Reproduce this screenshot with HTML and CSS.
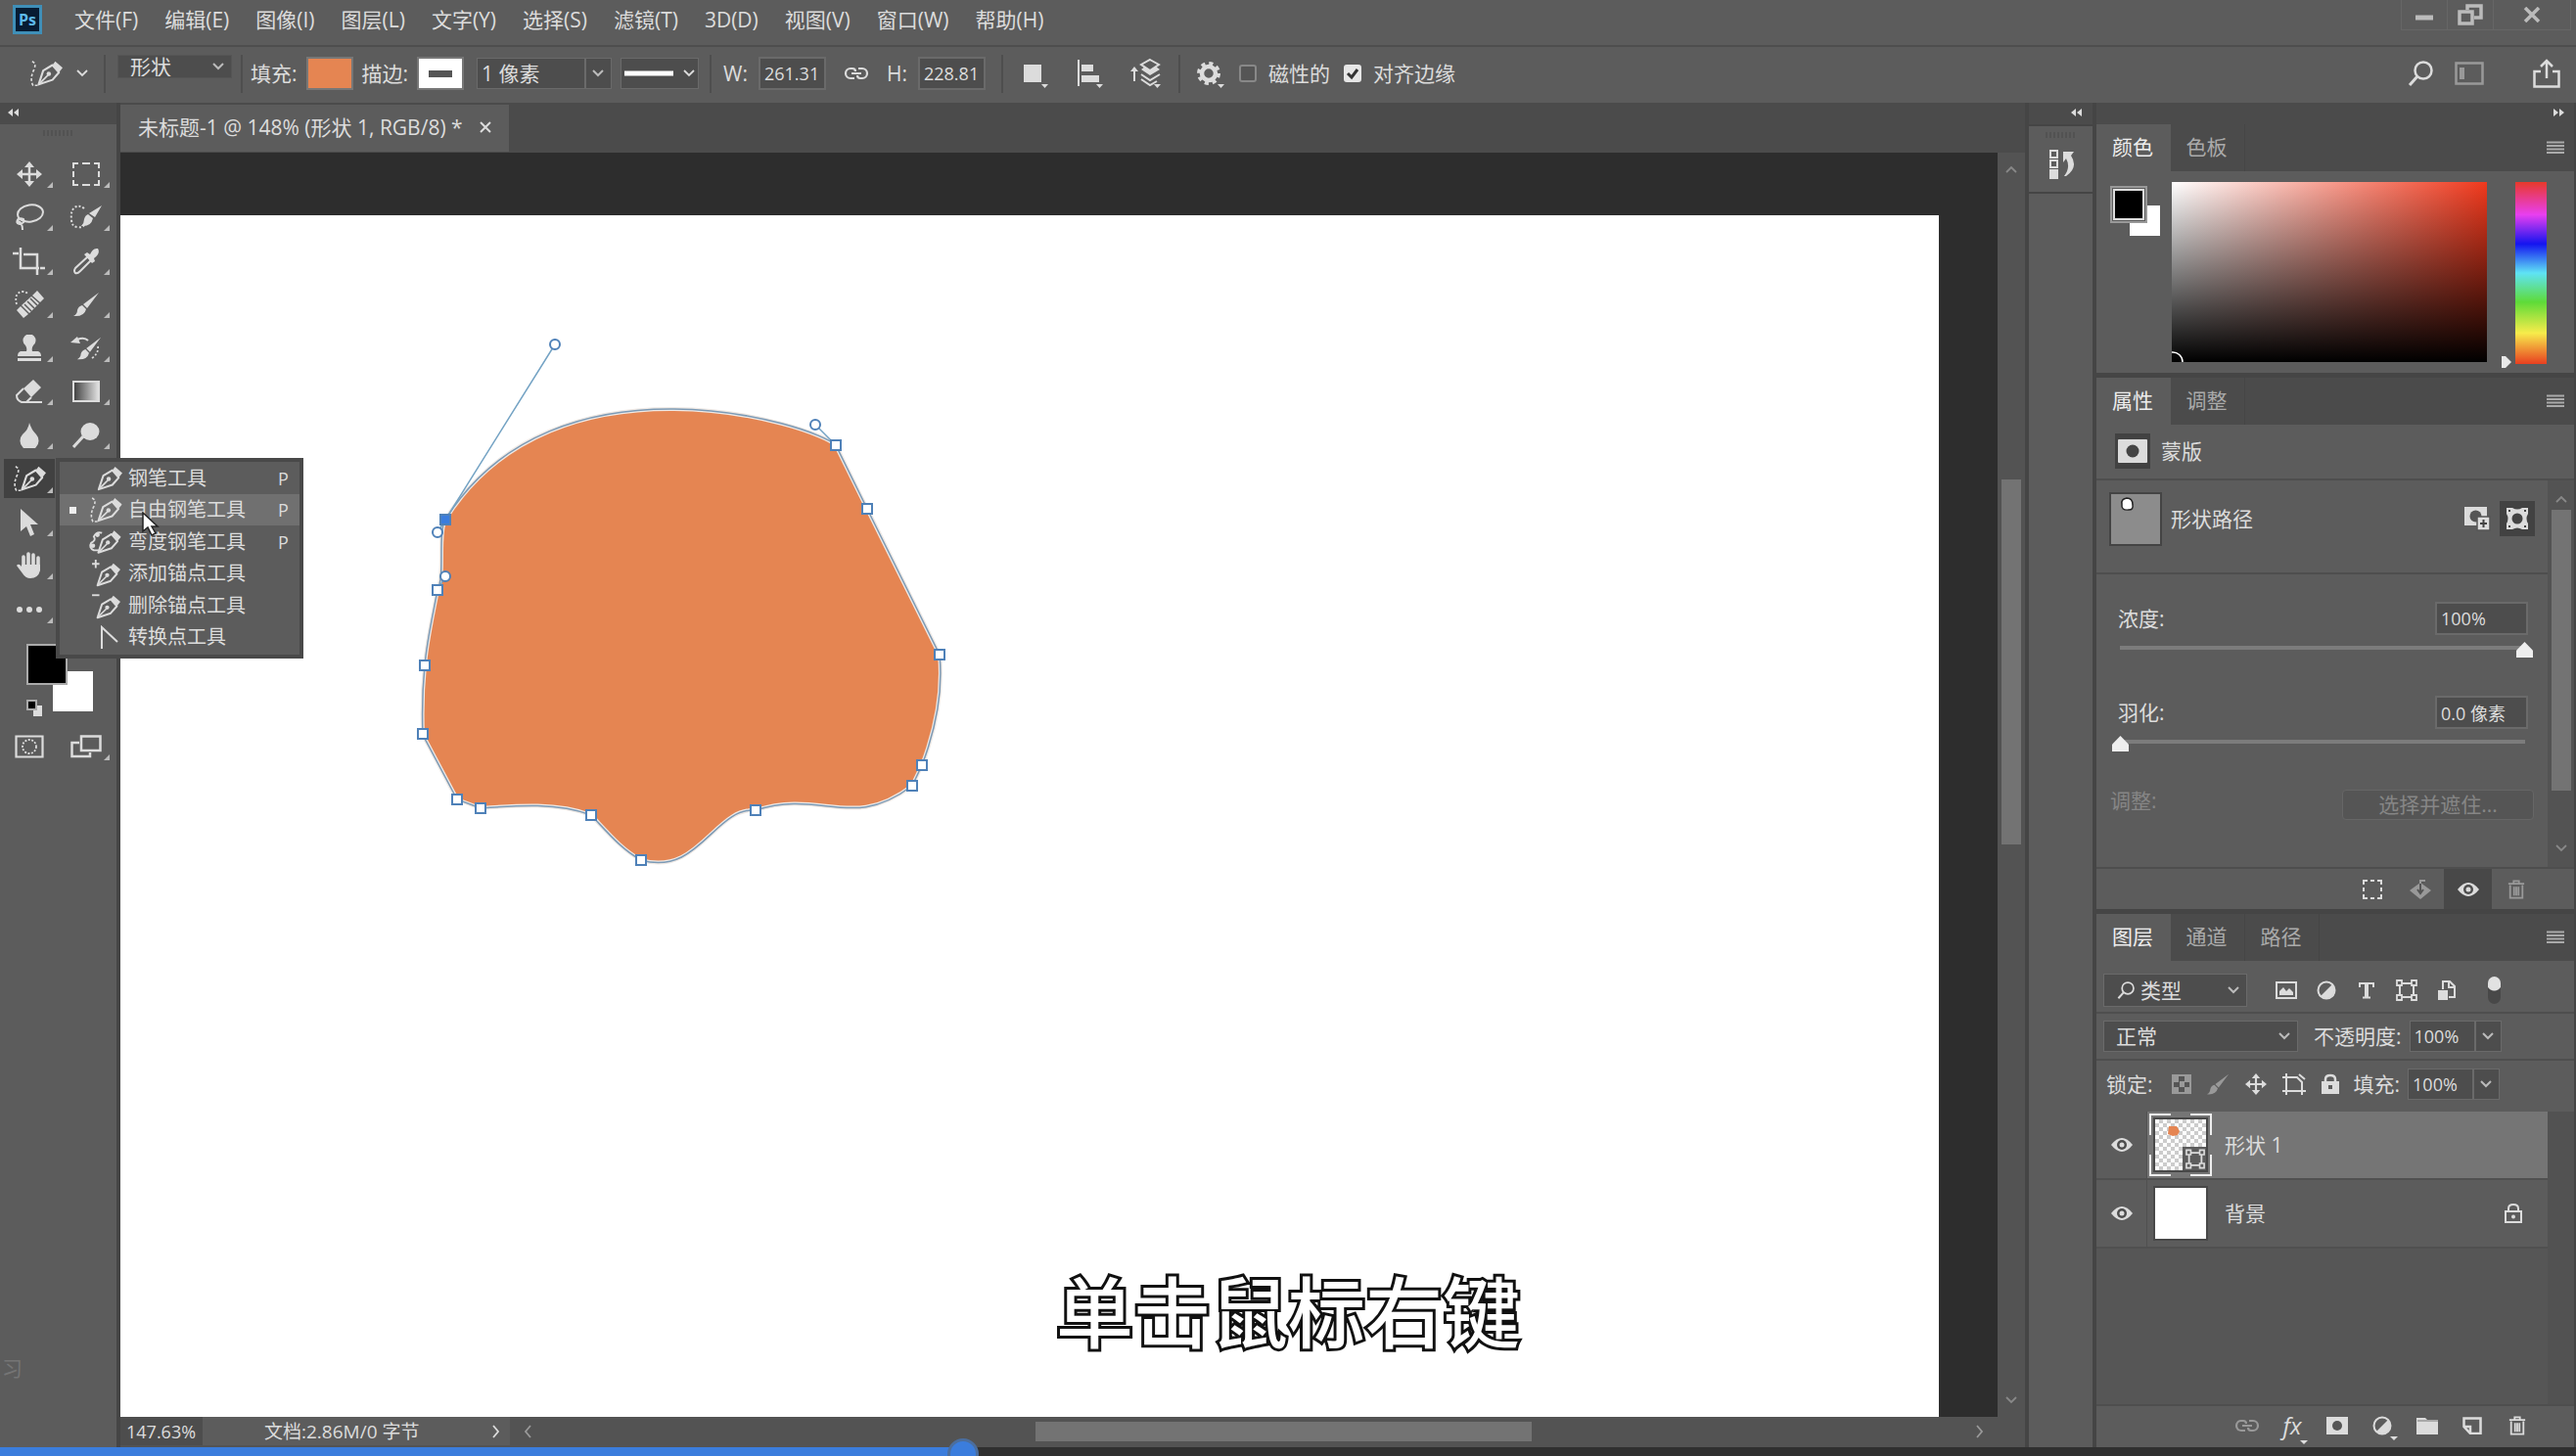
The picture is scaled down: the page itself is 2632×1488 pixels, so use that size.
FILE: index.html
```html
<!DOCTYPE html>
<html lang="zh-CN">
<head>
  <meta charset="UTF-8">
  <meta name="viewport" content="width=device-width, initial-scale=1.0">
  <title>未标题-1</title>
  <link rel="stylesheet" href="styles.css">
</head>
<body>

<svg class="symbols" aria-hidden="true">
  <symbol id="pen" viewBox="0 0 28 28">
    <path d="M2 26 L7 11 L17 5 L24 13 L17 21 Z" fill="none" stroke="currentColor" stroke-width="2.2" stroke-linejoin="round"/>
    <path d="M17 5 L20 1 L28 8 L24 13 Z" fill="currentColor"/>
    <path d="M3 25 L12 16" stroke="currentColor" stroke-width="1.8"/>
    <circle cx="13" cy="14.500" r="2.400" fill="currentColor"/>
  </symbol>
  <symbol id="freepen" viewBox="0 0 36 28">
    <path d="M3 1 Q8 3 5 10 Q0 20 4 27 L9 27" fill="none" stroke="currentColor" stroke-width="1.700" stroke-dasharray="3 2"/>
    <use href="#pen" x="8" y="0" width="28" height="28"/>
  </symbol>
  <symbol id="eye" viewBox="0 0 22 16">
    <path d="M0 8 Q11 -6 22 8 Q11 22 0 8 Z" fill="currentColor"/>
    <circle cx="11" cy="8" r="5" fill="#4d4d4d"/>
    <circle cx="11" cy="8" r="2.500" fill="currentColor"/>
  </symbol>
  <symbol id="link" viewBox="0 0 26 16">
    <path d="M11 13 H7 A5 5 0 0 1 7 3 H9 Q12 3 12 6 M15 3 H19 A5 5 0 0 1 19 13 H17 Q14 13 14 10 M8 8 H18" fill="none" stroke="currentColor" stroke-width="2.200"/>
  </symbol>
  <symbol id="brush" viewBox="0 0 28 28">
    <path d="M27 2 L15 18 L11 14 Z M10 15 L14 19 Q12 27 1 26 Q5 24 5 20 Q6 16 10 15 Z" fill="currentColor"/>
  </symbol>
  <symbol id="move" viewBox="0 0 26 26">
    <path d="M13 4 V22 M4 13 H22" stroke="currentColor" stroke-width="2.500"/>
    <path d="M13 0 L18 6 H8 Z M13 26 L18 20 H8 Z M0 13 L6 8 V18 Z M26 13 L20 8 V18 Z" fill="currentColor"/>
  </symbol>
  <symbol id="trash" viewBox="0 0 20 22">
    <path d="M1 4.500 H19 M7 4 V1.500 H13 V4 M3 6 V20.500 H17 V6 M7.500 8 V18 M10 8 V18 M12.500 8 V18" fill="none" stroke="currentColor" stroke-width="2"/>
  </symbol>
  <symbol id="halfcircle" viewBox="0 0 20 20">
    <circle cx="10" cy="10" r="8.500" fill="none" stroke="currentColor" stroke-width="2"/>
    <path d="M16 4 A8.500 8.500 0 0 1 4 16 Z" fill="currentColor"/>
  </symbol>
  <symbol id="shape" viewBox="0 0 22 22">
    <path d="M4 4 H18 V18 H4 Z" fill="none" stroke="currentColor" stroke-width="2"/>
    <path d="M1 1 H6 V6 H1 Z M16 1 H21 V6 H16 Z M1 16 H6 V21 H1 Z M16 16 H21 V21 H16 Z" fill="#5c5c5c" stroke="currentColor" stroke-width="1.800"/>
  </symbol>
  <symbol id="lens" viewBox="0 0 26 26">
    <circle cx="16" cy="10" r="8.500" fill="none" stroke="currentColor" stroke-width="2.500"/>
    <path d="M10 16 L2 25" stroke="currentColor" stroke-width="3"/>
  </symbol>
  <symbol id="up" viewBox="0 0 12 8"><path d="M1 7 L6 2 L11 7" fill="none" stroke="currentColor" stroke-width="1.800"/></symbol>
  <symbol id="down" viewBox="0 0 12 8"><path d="M1 1 L6 6 L11 1" fill="none" stroke="currentColor" stroke-width="1.800"/></symbol>
  <symbol id="left" viewBox="0 0 8 14"><path d="M7 1 L2 7 L7 13" fill="none" stroke="currentColor" stroke-width="1.800"/></symbol>
  <symbol id="right" viewBox="0 0 8 14"><path d="M1 1 L6 7 L1 13" fill="none" stroke="currentColor" stroke-width="1.800"/></symbol>
  <symbol id="collapse" viewBox="0 0 12 8"><path d="M5 0 V8 L0 4 Z M11 0 V8 L6 4 Z" fill="currentColor"/></symbol>
  <symbol id="expand" viewBox="0 0 12 8"><path d="M1 0 V8 L6 4 Z M7 0 V8 L12 4 Z" fill="currentColor"/></symbol>
  <symbol id="lines" viewBox="0 0 18 14"><path d="M0 1.500 H18 M0 5 H18 M0 8.500 H18 M0 12 H18" stroke="currentColor" stroke-width="2"/></symbol>
</svg>

<header class="menubar">
  <svg class="logo" width="30" height="30" viewBox="0 0 30 30">
    <rect x="1.500" y="1.500" width="27" height="27" fill="#071c33" stroke="#3f8fb8" stroke-width="3"/>
    <text x="15" y="21" text-anchor="middle" class="logo-text">Ps</text>
  </svg>
  <nav class="menus">
    <a href="#">文件(F)</a>
    <a href="#">编辑(E)</a>
    <a href="#">图像(I)</a>
    <a href="#">图层(L)</a>
    <a href="#">文字(Y)</a>
    <a href="#">选择(S)</a>
    <a href="#">滤镜(T)</a>
    <a href="#">3D(D)</a>
    <a href="#">视图(V)</a>
    <a href="#">窗口(W)</a>
    <a href="#">帮助(H)</a>
  </nav>
  <div class="window-buttons">
    <button aria-label="最小化"><svg width="18" height="12" viewBox="0 0 18 12"><path d="M0 9 H18" stroke="currentColor" stroke-width="5"/></svg></button>
    <button aria-label="还原"><svg width="26" height="22" viewBox="0 0 26 22"><path d="M10 6 V2 H24 V14 H17 M2 8 H15 V20 H2 Z" fill="none" stroke="currentColor" stroke-width="3.500"/></svg></button>
    <button class="close" aria-label="关闭"><svg width="18" height="16" viewBox="0 0 18 16"><path d="M2 1 L16 15 M16 1 L2 15" stroke="currentColor" stroke-width="3.500"/></svg></button>
  </div>
</header>

<div class="optionsbar">
  <div class="group tool-preset">
    <svg width="34" height="28"><use href="#freepen"/></svg>
    <svg width="12" height="8"><use href="#down"/></svg>
  </div>
  <div class="group mode">
    <select class="select mode-select" aria-label="工具模式"><option>形状</option></select>
  </div>
  <div class="group paint">
    <span>填充:</span><button class="swatch fill" aria-label="填充颜色"></button>
    <span>描边:</span><button class="swatch stroke" aria-label="描边颜色"></button>
    <select class="select split width-select" aria-label="描边宽度"><option>1 像素</option></select>
    <button class="line-select" aria-label="描边类型">
      <svg width="50" height="6"><path d="M0 3 H50" stroke="#fff" stroke-width="5"/></svg>
      <svg width="12" height="8"><use href="#down"/></svg>
    </button>
  </div>
  <div class="group size">
    <label for="w">W:</label><input class="num" id="w" value="261.31">
    <svg class="size-link" width="26" height="16"><use href="#link"/></svg>
    <label for="h">H:</label><input class="num" id="h" value="228.81">
  </div>
  <div class="group arrange">
    <button aria-label="路径操作"><svg width="28" height="30" viewBox="0 0 28 30"><path d="M1 6 H19 V24 H1 Z M19 26 H26 L22.500 30 Z" fill="currentColor"/></svg></button>
    <button aria-label="路径对齐方式"><svg width="28" height="30" viewBox="0 0 28 30"><path d="M2 1 V28" stroke="currentColor" stroke-width="2"/><path d="M5 6 H17 V13 H5 Z M5 17 H23 V24 H5 Z M20 26 H27 L23.500 30 Z" fill="currentColor"/></svg></button>
    <button aria-label="路径排列方式"><svg width="32" height="32" viewBox="0 0 32 32"><path d="M4 24 V12" stroke="currentColor" stroke-width="2"/><path d="M4 9 L8 14 H0 Z M11 12 L20 18 L30 12 L26 9 L20 13 L15 9 Z M24 27 H31 L27.500 31 Z" fill="currentColor"/><path d="M20 2 L29 7 L20 13 L11 7 Z M11 17 L20 23 L30 17 M11 22 L20 28 L27 24" fill="none" stroke="currentColor" stroke-width="2"/></svg></button>
  </div>
  <div class="group extras">
    <button aria-label="设置"><svg width="30" height="30" viewBox="0 0 30 30"><circle cx="13" cy="15" r="7" fill="none" stroke="currentColor" stroke-width="4.500"/><circle cx="13" cy="15" r="10" fill="none" stroke="currentColor" stroke-width="4" stroke-dasharray="4 3.850"/><path d="M22 26 H29 L25.500 30 Z" fill="currentColor"/></svg></button>
    <label class="check"><input type="checkbox">磁性的</label>
    <label class="check"><input type="checkbox" checked>对齐边缘</label>
  </div>
  <div class="right-tools">
    <button aria-label="搜索"><svg width="26" height="26"><use href="#lens"/></svg></button>
    <button class="dim" aria-label="工作区"><svg width="30" height="24" viewBox="0 0 30 24"><path d="M1.500 1.500 H28.500 V22.500 H1.500 Z" fill="none" stroke="currentColor" stroke-width="2.500"/><path d="M5 6 H10 V18 H5 Z" fill="currentColor"/></svg></button>
    <button aria-label="共享"><svg width="28" height="30" viewBox="0 0 28 30"><path d="M8 13 H1.500 V28.500 H26.500 V13 H20 M14 20 V3 M8 8 L14 2 L20 8" fill="none" stroke="currentColor" stroke-width="2.500"/></svg></button>
  </div>
</div>

<main class="workspace">
  <aside class="tools">
    <div class="strip"><svg width="12" height="8"><use href="#collapse"/></svg></div>
    <div class="grip"></div>
    <div class="tool-grid">
      <button class="more" aria-label="移动"><svg width="26" height="26"><use href="#move"/></svg></button>
      <button class="more" aria-label="矩形选框"><svg width="28" height="24" viewBox="0 0 28 24"><path d="M1 6 V1 H6 M10 1 H18 M22 1 H27 V6 M27 9 V15 M27 18 V23 H22 M18 23 H10 M6 23 H1 V18 M1 15 V9" fill="none" stroke="currentColor" stroke-width="2"/></svg></button>

      <button class="more" aria-label="套索"><svg width="30" height="28" viewBox="0 0 30 28"><ellipse cx="16" cy="10" rx="13" ry="8.500" transform="rotate(-8 16 10)" fill="none" stroke="currentColor" stroke-width="2"/><path d="M4 15 Q0 20 5 21 Q11 20 9 16 Q4 14 3 18 Q8 19 8 27" fill="none" stroke="currentColor" stroke-width="2"/></svg></button>
      <button class="more" aria-label="快速选择"><svg width="34" height="28" viewBox="0 0 34 28"><path d="M15 5 Q10 1 5 4 Q1 8 2 16 Q2 24 9 24 Q13 25 15 22" fill="none" stroke="currentColor" stroke-width="2" stroke-dasharray="2 2"/><path d="M33 2 L26 14 L20 10 Z M19 11 L24 15 Q22 24 12 23 Q15 20 15 16 Q16 12 19 11 Z" fill="currentColor"/></svg></button>

      <button class="more" aria-label="裁剪"><svg width="34" height="30" viewBox="0 0 34 30"><path d="M0 7 H6 M8 1 V22 H27 M11 8 H25 V29 M28 22 H33" fill="none" stroke="currentColor" stroke-width="2.500"/></svg></button>
      <button class="more" aria-label="吸管"><svg width="28" height="28" viewBox="0 0 28 28"><path d="M16 9 L3 21 Q1 24 3 26 Q5 27 8 24 L19 13" fill="none" stroke="currentColor" stroke-width="2"/><path d="M12 7 L15 5 L18 7 Q21 0 26 1 Q29 6 22 11 L23 14 L20 16 Z" fill="currentColor"/></svg></button>

      <button class="more" aria-label="修复画笔"><svg width="32" height="30" viewBox="0 0 32 30"><path d="M3 15 Q0 3 9 2 Q13 2 15 5" fill="none" stroke="currentColor" stroke-width="1.800" stroke-dasharray="2 2"/><path d="M24 1 L31 9 L27 13 L19 6 Z M7 17 L15 25 L10 29 L3 21 Z M18 7 L26 14 L16 24 L8 16 Z" fill="currentColor"/><path d="M11 15 L18 22 M14 12 L21 19 M17 9 L24 16" stroke="#5c5c5c" stroke-width="1.500"/></svg></button>
      <button class="more" aria-label="画笔"><svg width="28" height="28"><use href="#brush"/></svg></button>

      <button class="more" aria-label="仿制图章"><svg width="26" height="28" viewBox="0 0 26 28"><path d="M9 11 A6.500 6.500 0 1 1 17 11 Q15 14 16 17 H22 Q25 18 25 22 H1 Q1 18 4 17 H10 Q11 14 9 11 Z M1 24 H25 V27 H1 Z" fill="currentColor"/></svg></button>
      <button class="more" aria-label="历史记录画笔"><svg width="32" height="30" viewBox="0 0 32 30"><use href="#brush" x="6" y="1" width="26" height="28"/><path d="M0 9 L7 3 L10 10 Z" fill="currentColor"/><path d="M7 6 Q14 3 18 7" fill="none" stroke="currentColor" stroke-width="2"/><path d="M28 13 Q29 20 22 25" fill="none" stroke="currentColor" stroke-width="1.800" stroke-dasharray="2 2"/></svg></button>

      <button class="more" aria-label="橡皮擦"><svg width="28" height="26" viewBox="0 0 28 26"><path d="M18 1 L26 9 L16 19 L8 10 Z" fill="currentColor"/><path d="M8 10 L1 17 Q1 22 6 24 H11 L16 19 M8 24 H27" fill="none" stroke="currentColor" stroke-width="2"/></svg></button>
      <button class="more" aria-label="渐变"><span class="gradient-icon"></span></button>

      <button class="more" aria-label="模糊"><svg width="20" height="26" viewBox="0 0 20 26"><path d="M10 0 Q12 7 17 12 A9.500 9.500 0 1 1 3 12 Q9 7 10 0 Z" fill="currentColor"/></svg></button>
      <button class="more" aria-label="减淡"><svg width="28" height="28" viewBox="0 0 28 28"><ellipse cx="18" cy="10" rx="9.500" ry="9" fill="currentColor"/><path d="M11 15 L1 26" stroke="currentColor" stroke-width="3"/></svg></button>

      <button class="more active" aria-label="自由钢笔"><svg width="34" height="28"><use href="#freepen"/></svg></button>
      <button aria-label="横排文字"></button>

      <button class="more" aria-label="路径选择"><svg width="20" height="28" viewBox="0 0 20 28"><path d="M1 0 L19 16 H11 L15 26 L11 28 L7 18 L1 23 Z" fill="currentColor"/></svg></button>
      <button aria-label="矩形"></button>

      <button class="more" aria-label="抓手"><svg width="26" height="28" viewBox="0 0 26 28"><path d="M7 15 V5 M12 14 V2 M17 14 V3 M22 16 V6" stroke="currentColor" stroke-width="3.600" stroke-linecap="round"/><path d="M5 13 H24 V19 Q22 27 14 27 Q9 27 6 22 L0 14 Q2 11 5 15 Z" fill="currentColor"/></svg></button>
      <button aria-label="缩放"></button>

      <button class="more" aria-label="编辑工具栏"><svg width="28" height="8" viewBox="0 0 28 8"><circle cx="4" cy="4" r="3" fill="currentColor"/><circle cx="14" cy="4" r="3" fill="currentColor"/><circle cx="24" cy="4" r="3" fill="currentColor"/></svg></button>
    </div>
    <svg class="color-wells" width="72" height="78" viewBox="0 0 72 78">
      <rect x="27" y="28" width="41" height="41" fill="#fff"/>
      <rect x="1" y="1" width="40" height="40" fill="#000" stroke="#aaa" stroke-width="2"/>
      <path d="M7 63 H16 V74 H7 Z" fill="#ddd"/>
      <rect x="1" y="58" width="9" height="9" fill="#000" stroke="#aaa" stroke-width="2"/>
    </svg>
    <div class="screen-modes">
      <button aria-label="快速蒙版"><svg width="30" height="24" viewBox="0 0 30 24"><path d="M1.500 1.500 H28.500 V22.500 H1.500 Z" fill="none" stroke="currentColor" stroke-width="2.200"/><circle cx="15" cy="12" r="7" fill="none" stroke="currentColor" stroke-width="1.800" stroke-dasharray="2 1.500"/></svg></button>
      <button class="more" aria-label="屏幕模式"><svg width="32" height="24" viewBox="0 0 32 24"><path d="M11 1.500 H30.500 V16 H11 Z M9 8 H1.500 V22 H20 V18" fill="none" stroke="currentColor" stroke-width="2.500"/></svg></button>
    </div>
    <div class="watermark">习</div>

    <ul class="flyout">
      <li><svg width="26" height="26"><use href="#pen"/></svg>钢笔工具<kbd>P</kbd></li>
      <li class="current"><svg width="34" height="26"><use href="#freepen"/></svg>自由钢笔工具<kbd>P</kbd></li>
      <li><svg width="36" height="26" viewBox="0 0 36 28"><path d="M13 23 H6 Q0 20 3 15 Q9 12 6 8 Q9 2 15 4" fill="none" stroke="currentColor" stroke-width="2"/><circle cx="5" cy="18" r="2.500" fill="currentColor"/><circle cx="10" cy="6" r="2.500" fill="currentColor"/><use href="#pen" x="9" y="0" width="27" height="28"/></svg>弯度钢笔工具<kbd>P</kbd></li>
      <li><svg width="32" height="28" viewBox="0 0 32 30"><path d="M4 0 V9 M0 4.500 H8" stroke="currentColor" stroke-width="2"/><use href="#pen" x="4" y="3" width="27" height="27"/></svg>添加锚点工具</li>
      <li><svg width="32" height="28" viewBox="0 0 32 30"><path d="M0 3.500 H8" stroke="currentColor" stroke-width="2"/><use href="#pen" x="4" y="3" width="27" height="27"/></svg>删除锚点工具</li>
      <li><svg width="26" height="24" viewBox="0 0 26 24"><path d="M5 24 V2 L21 17" fill="none" stroke="currentColor" stroke-width="2"/></svg>转换点工具</li>
    </ul>
    <svg class="cursor" width="18" height="26" viewBox="0 0 18 26"><path d="M1 1 V20 L6 16 L10 24 L14 22 L10 15 H16 Z" fill="#fff" stroke="#222" stroke-width="1.500"/></svg>
  </aside>

  <section class="document">
    <div class="tabs">
      <div class="doc-tab">未标题-1 @ 148% (形状 1, RGB/8) *
        <button aria-label="关闭文档"><svg width="12" height="12" viewBox="0 0 12 12"><path d="M1 1 L11 11 M11 1 L1 11" stroke="currentColor" stroke-width="2"/></svg></button>
      </div>
    </div>
    <div class="stage">
      <div class="viewport">
        <svg class="artboard">
          <g transform="translate(-123 -220)">
            <path d="M455 531 C567 352 833 434 854 455 L886 520 L960 669 C963 700 960 735 942 782 L932 803 C870 850 840 806 772 828 C730 825 714 896 655 879 C635 868 622 852 604 833 C570 820 530 823 491 826 L467 817 L432 751 C431 725 432 700 434 680 C436 655 443 625 447 603 C455 589 447 544 455 531 Z" class="shape-fill"/>
            <path d="M455 531 C567 352 833 434 854 455 L886 520 L960 669 C963 700 960 735 942 782 L932 803 C870 850 840 806 772 828 C730 825 714 896 655 879 C635 868 622 852 604 833 C570 820 530 823 491 826 L467 817 L432 751 C431 725 432 700 434 680 C436 655 443 625 447 603 C455 589 447 544 455 531 Z" class="shape-path"/>
            <path d="M447 544 L567 352 M833 434 L854 455 M447 603 L455 589" class="handle-line"/>
            <g class="handles">
              <circle cx="567" cy="352" r="5"/>
              <circle cx="833" cy="434" r="5"/>
              <circle cx="447" cy="544" r="5"/>
              <circle cx="455" cy="589" r="5"/>
              <rect x="849" y="450" width="10" height="10"/>
              <rect x="881" y="515" width="10" height="10"/>
              <rect x="955" y="664" width="10" height="10"/>
              <rect x="937" y="777" width="10" height="10"/>
              <rect x="927" y="798" width="10" height="10"/>
              <rect x="767" y="823" width="10" height="10"/>
              <rect x="650" y="874" width="10" height="10"/>
              <rect x="599" y="828" width="10" height="10"/>
              <rect x="486" y="821" width="10" height="10"/>
              <rect x="462" y="812" width="10" height="10"/>
              <rect x="427" y="745" width="10" height="10"/>
              <rect x="429" y="675" width="10" height="10"/>
              <rect x="442" y="598" width="10" height="10"/>
              <rect class="selected" x="450" y="526" width="10" height="10"/>
            </g>
          </g>
        </svg>
      </div>
      <div class="vscroll">
        <svg width="12" height="8"><use href="#up"/></svg>
        <div class="track"><div class="thumb"></div></div>
        <svg width="12" height="8"><use href="#down"/></svg>
      </div>
    </div>
    <div class="statusbar">
      <input class="zoom" value="147.63%" aria-label="缩放">
      <div class="docsize">文档:2.86M/0 字节<svg width="8" height="14"><use href="#right"/></svg></div>
      <div class="hscroll">
        <svg width="8" height="14"><use href="#left"/></svg>
        <div class="track"><div class="thumb"></div></div>
        <svg width="8" height="14"><use href="#right"/></svg>
      </div>
    </div>
  </section>

  <aside class="dock">
    <div class="strip end"><svg width="12" height="8"><use href="#collapse"/></svg></div>
    <div class="dock-group">
      <div class="grip"></div>
      <button aria-label="历史记录"><svg width="28" height="32" viewBox="0 0 28 32"><path d="M2 2 H9 V9 H2 Z M2 12 H9 V19 H2 Z" fill="none" stroke="currentColor" stroke-width="2"/><path d="M1 21 H10 V31 H1 Z" fill="currentColor"/><path d="M15 3 H26 L23 7 Q31 19 18 28 H16 Q23 19 18 10 L15 14 Z" fill="currentColor"/></svg></button>
    </div>
    <div class="dock-rest"></div>
  </aside>

  <aside class="panels">
    <div class="strip end"><svg width="12" height="8"><use href="#expand"/></svg></div>

    <section class="panel color-panel">
      <div class="panel-tabs">
        <button class="on">颜色</button><button>色板</button>
        <svg width="18" height="14"><use href="#lines"/></svg>
      </div>
      <div class="color-body">
        <svg width="52" height="52" viewBox="0 0 52 52">
          <rect x="20" y="20" width="31" height="31" fill="#fff"/>
          <rect x="1" y="1" width="36" height="36" fill="#5c5c5c" stroke="#999" stroke-width="2"/>
          <rect x="4" y="4" width="30" height="30" fill="#000" stroke="#ddd" stroke-width="2"/>
        </svg>
        <div class="picker"><svg width="12" height="12" viewBox="0 0 12 12"><path d="M0 2 A10 10 0 0 1 11 12" fill="none" stroke="#fff" stroke-width="1.500"/></svg></div>
        <svg class="hue-mark" width="11" height="14" viewBox="0 0 11 14"><path d="M1 1 H5 L11 7 L5 13 H1 Z" fill="#e8e8e8"/></svg>
        <div class="hue"></div>
      </div>
    </section>

    <section class="panel props-panel">
      <div class="panel-tabs">
        <button class="on">属性</button><button>调整</button>
        <svg width="18" height="14"><use href="#lines"/></svg>
      </div>
      <div class="mask-head">
        <span class="dark-box"><svg width="30" height="24" viewBox="0 0 30 24"><rect width="30" height="24" rx="1" fill="currentColor"/><circle cx="15" cy="12" r="6.500" fill="#444"/></svg></span>蒙版
      </div>
      <div class="props-scroll">
        <div class="props-main">
          <div class="shape-row">
            <svg width="54" height="55" viewBox="0 0 54 55"><rect x="1" y="1" width="52" height="53" fill="#8c8c8c" stroke="#444" stroke-width="2"/><path d="M13 12 Q12 7 18 6 Q24 6 24 13 Q25 18 20 18 Q12 19 13 12 Z" fill="#fff" stroke="#222" stroke-width="1.500"/></svg>
            <span>形状路径</span>
            <svg class="add-mask" width="28" height="26" viewBox="0 0 28 26"><path d="M1 1 H24 V20 H1 Z" fill="currentColor"/><circle cx="12.500" cy="10.500" r="6" fill="#555"/><rect x="14" y="11" width="13" height="14" fill="#ddd" stroke="#555" stroke-width="1.500"/><path d="M17 18 H24 M20.500 14 V22" stroke="#444" stroke-width="2"/></svg>
            <span class="dark-box"><svg width="24" height="24" viewBox="0 0 24 24"><path d="M1 1 H7 Q12 4 17 1 H23 V7 Q20 12 23 17 V23 H17 Q12 20 7 23 H1 V17 Q4 12 1 7 Z" fill="currentColor"/><circle cx="12" cy="12" r="5.500" fill="#444"/><path d="M3 3 H5 V5 H3 Z M19 3 H21 V5 H19 Z M3 19 H5 V21 H3 Z M19 19 H21 V21 H19 Z" fill="#444"/></svg></span>
          </div>
          <div class="slider-block">
            <div class="slider-head"><label for="density">浓度:</label><input class="num" value="100%" aria-label="浓度值"></div>
            <input type="range" id="density" value="100">
          </div>
          <div class="slider-block">
            <div class="slider-head"><label for="feather">羽化:</label><input class="num" value="0.0 像素" aria-label="羽化值"></div>
            <input type="range" id="feather" value="0">
          </div>
          <div class="refine">调整:<button disabled>选择并遮住...</button></div>
        </div>
        <div class="vscroll">
          <svg width="12" height="8"><use href="#up"/></svg>
          <div class="track"><div class="thumb"></div></div>
          <svg width="12" height="8"><use href="#down"/></svg>
        </div>
      </div>
      <div class="props-foot">
        <button aria-label="载入选区"><svg width="20" height="20" viewBox="0 0 20 20"><path d="M1 5 V1 H5 M8 1 H12 M15 1 H19 V5 M19 8 V12 M19 15 V19 H15 M12 19 H8 M5 19 H1 V15 M1 12 V8" fill="none" stroke="currentColor" stroke-width="2"/></svg></button>
        <button class="dim" aria-label="应用蒙版"><svg width="24" height="22" viewBox="0 0 24 22"><path d="M12 4 L23 12 L12 21 L1 12 Z" fill="currentColor"/><path d="M9 11 L12 15 L15 11 M12 14 V3 H16" fill="none" stroke="#555" stroke-width="2"/><path d="M12 5 V2 H17" fill="none" stroke="currentColor" stroke-width="2"/></svg></button>
        <button class="pressed" aria-label="停用蒙版"><svg width="22" height="16"><use href="#eye"/></svg></button>
        <button class="dim" aria-label="删除蒙版"><svg width="18" height="22"><use href="#trash"/></svg></button>
      </div>
    </section>

    <section class="panel layers-panel">
      <div class="panel-tabs">
        <button class="on">图层</button><button>通道</button><button>路径</button>
        <svg width="18" height="14"><use href="#lines"/></svg>
      </div>
      <div class="filter-row">
        <div class="kind"><svg width="18" height="20"><use href="#lens"/></svg><select class="select" aria-label="图层过滤"><option>类型</option></select></div>
        <div class="filter-icons">
          <button aria-label="像素图层"><svg width="22" height="18" viewBox="0 0 22 18"><path d="M1 1 H21 V17 H1 Z" fill="none" stroke="currentColor" stroke-width="2"/><path d="M4 14 V10 L8 6 L11 10 L14 7 L18 11 V14 Z" fill="currentColor"/></svg></button>
          <button aria-label="调整图层"><svg width="20" height="20"><use href="#halfcircle"/></svg></button>
          <button aria-label="文字图层"><svg width="18" height="18" viewBox="0 0 18 18"><path d="M1 2 H17 M2 1 V6 M16 1 V6 M5 16.500 H13" fill="none" stroke="currentColor" stroke-width="2"/><path d="M9 1 V17" stroke="currentColor" stroke-width="4"/></svg></button>
          <button aria-label="形状图层"><svg width="22" height="22"><use href="#shape"/></svg></button>
          <button aria-label="智能对象"><svg width="20" height="22" viewBox="0 0 20 22"><path d="M6 10 V2 H13 L18 7 V18 H12 M12 2 V8 H18" fill="none" stroke="currentColor" stroke-width="2"/><path d="M1 11 H11 V21 H1 Z" fill="currentColor"/></svg></button>
        </div>
        <span class="toggle"></span>
      </div>
      <div class="blend-row">
        <select class="select blend" aria-label="混合模式"><option>正常</option></select>
        <label for="opacity">不透明度:</label>
        <select class="select split percent" id="opacity"><option>100%</option></select>
      </div>
      <div class="lock-row">
        <span>锁定:</span>
        <div class="lock-icons">
          <span class="checker"></span>
          <svg class="dim" width="24" height="24"><use href="#brush"/></svg>
          <svg width="22" height="22"><use href="#move"/></svg>
          <svg width="24" height="22" viewBox="0 0 24 22"><path d="M0 4 H15 L20 9 V18 M4 0 V18 H24 M4 18 V22 M20 18 V22 M17 1 L23 6 M0 18 H4" fill="none" stroke="currentColor" stroke-width="2"/></svg>
          <svg width="18" height="22" viewBox="0 0 18 22"><path d="M4 9 V6 Q4 2 9 2 Q14 2 14 6 V9" fill="none" stroke="currentColor" stroke-width="2.500"/><path d="M0 8 H18 V21 H0 Z M7 12 V16 H11 V12 Z" fill="currentColor" fill-rule="evenodd"/></svg>
        </div>
        <label for="fill">填充:</label>
        <select class="select split percent" id="fill"><option>100%</option></select>
      </div>
      <div class="layer-list">
        <div class="layers">
          <div class="layer selected">
            <button class="eye" aria-label="可见性"><svg width="22" height="16"><use href="#eye"/></svg></button>
            <div class="layer-body">
              <div class="frame"><div class="thumbnail transparent">
                <svg width="52" height="52" viewBox="0 0 52 52"><path d="M14 7 H22 L25 12 L23 16 L18 17 L13 15 Z" fill="#e58552"/><rect x="28" y="28" width="24" height="24" fill="#5c5c5c"/><use href="#shape" x="31" y="30" width="20" height="21"/></svg>
              </div></div>
              <span>形状 1</span>
            </div>
          </div>
          <div class="layer">
            <button class="eye" aria-label="可见性"><svg width="22" height="16"><use href="#eye"/></svg></button>
            <div class="layer-body">
              <div class="frame plain"><div class="thumbnail"></div></div>
              <span>背景</span>
              <svg class="locked" width="18" height="22" viewBox="0 0 18 22"><path d="M4 9 V6 Q4 2 9 2 Q14 2 14 6 V9 M1 9 H17 V20 H1 Z" fill="none" stroke="currentColor" stroke-width="2"/><circle cx="9" cy="14.500" r="2" fill="currentColor"/></svg>
            </div>
          </div>
        </div>
        <div class="list-scroll"></div>
      </div>
      <div class="layers-foot">
        <button class="dim" aria-label="链接图层"><svg width="26" height="16"><use href="#link"/></svg></button>
        <button class="fx more-dot" aria-label="图层样式">fx</button>
        <button aria-label="添加蒙版"><svg width="22" height="18" viewBox="0 0 22 18"><rect width="22" height="18" fill="currentColor"/><circle cx="11" cy="9" r="5" fill="#555"/></svg></button>
        <button class="more-dot" aria-label="新建调整图层"><svg width="20" height="20"><use href="#halfcircle"/></svg></button>
        <button aria-label="新建组"><svg width="22" height="18" viewBox="0 0 22 18"><path d="M0 1 H9 L11 3 H22 V18 H0 Z" fill="currentColor"/><path d="M1 4 H22" stroke="#777" stroke-width="1"/></svg></button>
        <button aria-label="新建图层"><svg width="20" height="18" viewBox="0 0 20 18"><path d="M8 17 H18.500 V1.500 H1.500 V10 L8 17 V10 H2" fill="none" stroke="currentColor" stroke-width="2.500"/></svg></button>
        <button aria-label="删除图层"><svg width="18" height="22"><use href="#trash"/></svg></button>
      </div>
    </section>
  </aside>
</main>

<div class="progress"><div class="played"></div></div>
<p class="subtitle">单击鼠标右键</p>

</body>
</html>
```
FILE: styles.css
```css
:root {
  --panel: #5c5c5c;
  --strip: #4b4b4b;
  --field: #4d4d4d;
  --line: #454545;
  --edge: #6a6a6a;
  --text: #dcdcdc;
  --dim: #999;
  --chevron: url("data:image/svg+xml,%3Csvg xmlns='http://www.w3.org/2000/svg' width='12' height='8'%3E%3Cpath d='M1 1L6 6L11 1' fill='none' stroke='%23bbb' stroke-width='2'/%3E%3C/svg%3E");
}

* { box-sizing: border-box; }
html, body { height: 100%; }
body {
  margin: 0;
  display: flex;
  flex-direction: column;
  position: relative;
  overflow: hidden;
  background: #444;
  color: var(--text);
  font-family: "Open Sans", "Noto Sans CJK SC", sans-serif;
  font-size: 21px;
  line-height: 28px;
}
button, input, select { font: inherit; color: inherit; }
button {
  display: flex;
  align-items: center;
  justify-content: center;
  margin: 0;
  padding: 0;
  border: 0;
  background: none;
}
svg { display: block; flex: none; }
.symbols { position: absolute; width: 0; height: 0; }
.dim { color: var(--dim); }

/* menu bar */
.menubar {
  flex: none;
  display: flex;
  align-items: flex-start;
  height: 46px;
  padding-left: 13px;
  background: var(--panel);
}
.logo { margin-top: 5px; }
.logo-text { fill: #5db9ec; font-size: 16px; font-weight: bold; }
.menus {
  display: flex;
  gap: 27px;
  margin: 6px 0 0 33px;
}
.menus a { color: inherit; text-decoration: none; white-space: nowrap; }
.window-buttons {
  display: flex;
  height: 31px;
  margin: 0 5px 0 auto;
  border: 1px solid #666;
  border-top: 0;
  color: #bbb;
}
.window-buttons button { width: 47px; border-right: 1px solid #666; }
.window-buttons .close { width: 78px; border: 0; }

/* options bar */
.optionsbar {
  flex: none;
  display: flex;
  align-items: center;
  height: 59px;
  padding-bottom: 3px;
  background: var(--panel);
  border-top: 2px solid #4e4e4e;
}
.group {
  display: flex;
  align-items: center;
  height: 39px;
  border-right: 2px solid #4e4e4e;
  white-space: nowrap;
}
.tool-preset { gap: 14px; padding: 0 16px 0 30px; }
.mode { align-items: flex-start; padding: 0 9px 0 12px; }
.paint { gap: 9px; padding: 0 11px 0 8px; }
.size { padding: 0 16px 0 12px; gap: 11px; }
.size-link { margin: 0 7px; }
.arrange { gap: 27px; padding: 0 17px 0 20px; }
.extras { gap: 14px; padding: 0 0 0 16px; border: 0; }
.select {
  height: 32px;
  padding: 0 30px 0 12px;
  border: 1px solid var(--edge);
  background: var(--chevron) no-repeat right 7px center var(--field);
  appearance: none;
  line-height: 26px;
}
.split {
  background:
    linear-gradient(var(--edge), var(--edge)) no-repeat right 25px center / 2px 100%,
    var(--chevron) no-repeat right 7px center,
    var(--field);
}
.mode-select { width: 117px; height: 24px; line-height: 20px; border-color: #555; }
.width-select { width: 138px; margin-left: 4px; padding-left: 4px; }
.swatch { width: 48px; height: 34px; border: 2px solid #777; }
.fill { background: #e58552; }
.stroke { background: linear-gradient(#555, #555) center / 24px 7px no-repeat #fff; }
.line-select {
  width: 80px;
  height: 32px;
  gap: 10px;
  background: var(--field);
  border: 1px solid var(--edge);
}
.num {
  width: 69px;
  height: 34px;
  padding: 0 4px;
  background: var(--field);
  border: 2px solid var(--edge);
  font-size: 18px;
}
.check { display: flex; align-items: center; gap: 12px; }
.check input {
  appearance: none;
  width: 18px;
  height: 18px;
  margin: 0;
  border: 2px solid #888;
  border-radius: 3px;
  background: #555;
}
.check input:checked {
  border-color: #e6e6e6;
  background: #e6e6e6 url("data:image/svg+xml,%3Csvg xmlns='http://www.w3.org/2000/svg' width='14' height='14'%3E%3Cpath d='M2 7L6 11L12 3' fill='none' stroke='%23333' stroke-width='3'/%3E%3C/svg%3E") center no-repeat;
}
.right-tools {
  display: flex;
  align-items: center;
  gap: 22px;
  margin: 0 16px 0 auto;
}
.right-tools button:last-child { margin-left: 28px; }

/* workspace */
.workspace {
  flex: 1;
  min-height: 0;
  display: flex;
  gap: 4px;
  background: var(--line);
}
.strip {
  flex: none;
  display: flex;
  align-items: center;
  height: 22px;
  padding: 0 8px 2px;
  background: var(--strip);
}
.strip.end { justify-content: flex-end; padding: 0 10px 2px; }

/* tools */
.tools {
  position: relative;
  flex: none;
  display: flex;
  flex-direction: column;
  width: 119px;
  background: var(--panel);
}
.grip {
  width: 32px;
  height: 6px;
  margin: 6px auto 16px;
  background: repeating-linear-gradient(90deg, #525252 0 2px, transparent 2px 4px);
}
.tool-grid {
  display: grid;
  grid-template-columns: 58px 58px;
  grid-auto-rows: 45px 44px;
  padding: 0 1px;
}
.more { position: relative; }
.more::after {
  content: "";
  position: absolute;
  right: 5px;
  bottom: 8px;
  border: 3px solid transparent;
  border-right-color: #bbb;
  border-bottom-color: #bbb;
}
.active { margin: 2px 3px; background: #414141; }
.active::after { right: 2px; bottom: 5px; }
.gradient-icon {
  width: 28px;
  height: 22px;
  border: 2px solid var(--text);
  background: linear-gradient(90deg, #444, #ddd);
}
.color-wells { margin: 13px 0 0 27px; }
.screen-modes {
  display: grid;
  grid-template-columns: 58px 58px;
  height: 44px;
  margin-top: 5px;
  padding: 0 1px;
}
.watermark { margin: auto 0 67px 2px; color: #757575; }

.flyout {
  position: absolute;
  left: 57px;
  top: 363px;
  z-index: 2;
  display: grid;
  grid-auto-rows: 33px 32px;
  width: 253px;
  margin: 0;
  padding: 0 0 2px;
  list-style: none;
  background: var(--panel);
  border: 4px solid #494949;
  font-size: 20px;
}
.flyout li {
  display: grid;
  grid-template-columns: 64px 1fr 20px;
  align-items: center;
  gap: 0 6px;
  padding-right: 2px;
}
.flyout li svg { justify-self: end; }
.flyout .current {
  background: linear-gradient(#eee, #eee) 10px 50% / 7px 7px no-repeat #707070;
}
.flyout kbd { font: inherit; font-size: 18px; }
.cursor { position: absolute; left: 145px; top: 418px; z-index: 3; }

/* document */
.document {
  flex: 1;
  min-width: 0;
  display: flex;
  flex-direction: column;
}
.tabs { flex: none; height: 51px; padding-top: 2px; background: var(--strip); }
.doc-tab {
  display: flex;
  align-items: center;
  gap: 17px;
  width: fit-content;
  height: 48px;
  padding: 0 18px 2px;
  background: var(--panel);
  white-space: nowrap;
}
.stage { flex: 1; min-height: 0; display: flex; }
.viewport {
  flex: 1;
  min-width: 0;
  display: flex;
  padding: 64px 60px 0 0;
  background: #2d2d2d;
}
.artboard { flex: 1; height: 100%; min-width: 0; background: #fff; }
.shape-fill { fill: #e58552; stroke: #efe9e5; stroke-width: 4; }
.shape-path { fill: none; stroke: #7c9ab5; stroke-width: 1.5; }
.handle-line { fill: none; stroke: #74a3c4; stroke-width: 1.5; }
.handles { fill: #fff; stroke: #4f81b8; stroke-width: 2; }
.handles .selected { fill: #3b7ddd; }

.vscroll {
  flex: none;
  display: flex;
  flex-direction: column;
  align-items: center;
  width: 28px;
  padding: 13px 0;
  background: #535353;
  color: #888;
}
.vscroll .track { flex: 1; width: 20px; }
.vscroll .thumb { background: #737373; height: 100%; }
.stage .track { padding: 313px 0 564px; }
.statusbar {
  flex: none;
  display: flex;
  height: 31px;
  padding-bottom: 2px;
  background: #535353;
}
.zoom {
  width: 84px;
  padding: 0 0 0 6px;
  border: 0;
  background: #4d4d4d;
  font-size: 18px;
}
.docsize {
  display: flex;
  align-items: center;
  justify-content: space-between;
  width: 314px;
  padding: 0 10px 0 63px;
  background: var(--panel);
  font-size: 19px;
}
.hscroll {
  flex: 1;
  display: flex;
  align-items: center;
  gap: 14px;
  padding: 0 42px 0 14px;
  color: #999;
}
.hscroll .track { flex: 1; padding: 0 440px 0 501px; }
.hscroll .thumb { height: 20px; background: #737373; }

/* dock */
.dock {
  flex: none;
  display: flex;
  flex-direction: column;
  gap: 2px;
  width: 65px;
}
.dock-group { height: 67px; background: var(--panel); }
.dock .grip { margin-bottom: 11px; }
.dock button { width: 100%; padding-left: 3px; }
.dock-rest { flex: 1; background: var(--panel); }

/* panels */
.panels {
  flex: none;
  display: flex;
  flex-direction: column;
  width: 490px;
  padding-right: 2px;
}
.panel { background: var(--panel); margin-bottom: 5px; }
.panel-tabs {
  flex: none;
  display: flex;
  align-items: center;
  height: 48px;
  background: var(--strip);
}
.panel-tabs button {
  width: 76px;
  height: 48px;
  padding: 0 2px 3px 0;
  color: #aaa;
  border-right: 1px solid #454545;
}
.panel-tabs .on { background: var(--panel); color: #eee; border: 0; }
.panel-tabs svg { margin: 0 10px 0 auto; color: #aaa; }
.color-body {
  display: flex;
  align-items: flex-start;
  height: 206px;
  padding: 11px 28px 0 14px;
}
.color-body > svg:first-child { margin-top: 4px; }
.picker {
  flex: 1;
  display: flex;
  align-items: flex-end;
  height: 184px;
  margin-left: 11px;
  background: linear-gradient(to top, #000, transparent), linear-gradient(to right, #fff, #f0391d);
}
.hue-mark { align-self: flex-start; margin: 177px 4px 0 14px; }
.hue {
  width: 32px;
  height: 186px;
  background: linear-gradient(#e8392a, #e83ff0 18%, #1414f0 34%, #5fe3f5 50%, #5edb38 66%, #f7ec4b 83%, #e83f20);
}
.mask-head {
  display: flex;
  align-items: center;
  gap: 11px;
  height: 57px;
  padding: 0 0 2px 19px;
  border-bottom: 2px solid #4e4e4e;
}
.dark-box {
  display: flex;
  align-items: center;
  justify-content: center;
  width: 36px;
  height: 36px;
  background: #424242;
}
.props-scroll { display: flex; height: 395px; }
.props-main { flex: 1; min-width: 0; }
.shape-row {
  display: flex;
  align-items: center;
  gap: 9px;
  height: 96px;
  padding: 0 13px 16px;
  border-bottom: 2px solid #4e4e4e;
}
.add-mask { margin-left: auto; }
.slider-block { height: 96px; padding: 0 15px 0 16px; }
.shape-row + .slider-block { margin-top: 28px; }
.slider-head {
  display: flex;
  align-items: center;
  justify-content: space-between;
  padding: 0 5px 0 6px;
}
.slider-head .num { width: 95px; }
input[type=range] {
  appearance: none;
  display: block;
  width: 100%;
  height: 18px;
  margin: 6px 0 0;
  background: linear-gradient(#7c7c7c, #7c7c7c) 8px 5px / calc(100% - 16px) 4px no-repeat;
}
input[type=range]::-webkit-slider-thumb {
  appearance: none;
  width: 17px;
  height: 16px;
  background: #eee;
  clip-path: polygon(50% 0, 100% 55%, 100% 100%, 0 100%, 0 55%);
}
.refine {
  display: flex;
  align-items: flex-start;
  justify-content: space-between;
  padding: 0 14px;
  line-height: 22px;
  color: #868686;
}
.refine button {
  width: 196px;
  height: 31px;
  padding-bottom: 2px;
  border: 1px solid #666;
  border-radius: 4px;
  background: #555;
}
.props-scroll .vscroll { width: 27px; padding: 15px 0; }
.props-scroll .track { padding: 7px 0 55px; }
.props-foot {
  display: flex;
  justify-content: flex-end;
  height: 43px;
  padding-right: 35px;
  border-top: 2px solid #4e4e4e;
}
.props-foot button { width: 49px; }
.pressed { background: #484848; }

.layers-panel {
  flex: 1;
  min-height: 0;
  display: flex;
  flex-direction: column;
  margin: 0;
}
.filter-row, .blend-row, .lock-row {
  flex: none;
  display: flex;
  align-items: center;
  padding-left: 7px;
}
.filter-row { height: 54px; padding-top: 8px; border-bottom: 2px solid #4e4e4e; }
.blend-row { height: 48px; border-bottom: 2px solid #4e4e4e; }
.lock-row { height: 52px; padding: 0 0 4px 10px; }
.kind {
  display: flex;
  align-items: center;
  width: 147px;
  padding-left: 13px;
  background: var(--field);
  border: 1px solid var(--edge);
}
.kind .select { flex: 1; border: 0; padding-left: 6px; background-color: transparent; }
.filter-icons { display: flex; margin-left: 19px; }
.filter-icons button { width: 41px; }
.toggle {
  width: 13px;
  height: 28px;
  margin-left: 22px;
  border-radius: 7px;
  background: radial-gradient(circle at 50% 7px, #e2e2e2 7px, #484848 8px);
}
.blend { width: 199px; margin-right: 16px; }
.percent { width: 94px; margin-left: 8px; padding-left: 4px; font-size: 18px; }
.lock-icons {
  display: flex;
  align-items: center;
  justify-content: space-between;
  width: 171px;
  margin: 0 15px 0 19px;
}
.checker {
  width: 20px;
  height: 20px;
  border: 2px solid var(--dim);
  background: repeating-conic-gradient(#555 0 25%, #999 0 50%) 0 0 / 11px 11px;
}
.layer-list { flex: 1; min-height: 0; display: flex; background: #565656; }
.layers { flex: 1; }
.layer { display: flex; height: 70px; background: var(--panel); border-bottom: 2px solid #505050; }
.eye { width: 52px; border-right: 1px solid #505050; }
.layer-body {
  flex: 1;
  display: flex;
  align-items: center;
  gap: 13px;
  padding: 0 26px 0 2px;
}
.selected .layer-body { background: #757575; }
/* corner brackets around the active thumbnail */
.frame {
  padding: 6px;
  background:
    linear-gradient(#757575, #757575) center / 20px 100% no-repeat,
    linear-gradient(#757575, #757575) center / 100% 20px no-repeat,
    linear-gradient(#757575, #757575) center / calc(100% - 4px) calc(100% - 4px) no-repeat,
    #eee;
}
.frame.plain { background: none; }
.thumbnail { width: 52px; height: 52px; background: #fff; outline: 2px solid #484848; }
.transparent { background: repeating-conic-gradient(#ccc 0 25%, #fff 0 50%) 0 0 / 8px 8px; }
.locked { margin-left: auto; }
.list-scroll { width: 27px; background: #525252; }
.layers-foot {
  flex: none;
  display: flex;
  align-items: center;
  justify-content: flex-end;
  height: 44px;
  padding: 0 35px 2px 0;
  border-top: 2px solid #4e4e4e;
}
.layers-foot button { width: 46px; }
.fx { font-style: italic; font-size: 24px; }
.more-dot { position: relative; }
.more-dot::after {
  content: "";
  position: absolute;
  right: 7px;
  bottom: -5px;
  border: 4px solid transparent;
  border-bottom: 0;
  border-top-color: #ddd;
}

/* player overlay */
.progress { flex: none; height: 9px; background: #303030; }
.played {
  position: relative;
  width: 37.5%;
  height: 100%;
  background: #3b7ddd;
}
.played::after {
  content: "";
  position: absolute;
  right: -13px;
  top: -9px;
  width: 26px;
  height: 26px;
  border-radius: 50%;
  border: 3px solid #4b6e9e;
  background: #3b7ddd;
}
.subtitle {
  position: absolute;
  left: 0;
  right: 0;
  bottom: 90px;
  z-index: 4;
  margin: 0;
  text-align: center;
  font-family: "Noto Sans CJK SC", sans-serif;
  font-size: 79px;
  font-weight: 500;
  line-height: 120px;
  color: #fff;
  -webkit-text-stroke: 6px #111;
  paint-order: stroke fill;
}
```
